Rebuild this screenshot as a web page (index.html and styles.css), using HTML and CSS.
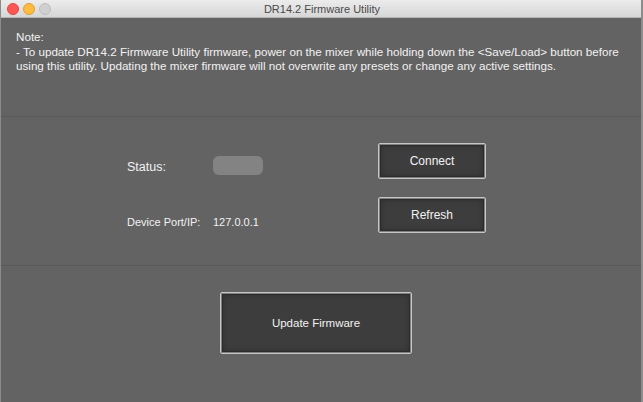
FILE: index.html
```html
<!DOCTYPE html>
<html>
<head>
<meta charset="utf-8">
<title>DR14.2 Firmware Utility</title>
<link rel="stylesheet" href="styles.css">
</head>
<body>
<div class="window">
  <div class="titlebar">
    <div class="lights">
      <span class="light red"></span>
      <span class="light yellow"></span>
      <span class="light gray"></span>
    </div>
    <div class="title">DR14.2 Firmware Utility</div>
  </div>
  <div class="note">
    <div>Note:</div>
    <div>- To update DR14.2 Firmware Utility firmware, power on the mixer while holding down the &lt;Save/Load&gt; button before<br>using this utility. Updating the mixer firmware will not overwrite any presets or change any active settings.</div>
  </div>
  <div class="middle">
    <div class="label status-label">Status:</div>
    <div class="pill"></div>
    <button class="btn small">Connect</button>
    <div class="label port-label">Device Port/IP:</div>
    <div class="label port-value">127.0.0.1</div>
    <button class="btn small">Refresh</button>
  </div>
  <div class="bottom">
    <button class="btn big">Update Firmware</button>
  </div>
</div>
</body>
</html>
```

FILE: styles.css
```css
html, body {
  margin: 0;
  padding: 0;
  background: #636363;
  width: 643px;
  height: 402px;
  overflow: hidden;
}

.window {
  width: 643px;
  height: 402px;
  display: flex;
  flex-direction: column;
  font-family: "Liberation Sans", Arial, sans-serif;
  color: #f2f2f2;
  background: #636363;
  box-sizing: border-box;
  border-left: 1px solid #8c8c8c;
  border-right: 2px solid #8c8c8c;
}

.titlebar {
  height: 18px;
  flex: none;
  position: relative;
  background: linear-gradient(#ececec, #d6d6d6);
  border-bottom: 1px solid #b5b5b5;
  box-sizing: border-box;
  display: flex;
  align-items: center;
  justify-content: center;
}

.lights {
  position: absolute;
  left: 6px;
  top: 3px;
  display: flex;
  gap: 4px;
}

.light {
  width: 12px;
  height: 12px;
  border-radius: 50%;
  box-sizing: border-box;
}
.red { background: #fc5753; border: 1px solid #df4744; }
.yellow { background: #fdbc40; border: 1px solid #de9f34; }
.gray { background: #d0d0d0; border: 1px solid #bdbdbd; }

.title {
  font-size: 11px;
  color: #4a4a4a;
  padding-left: 2px;
}

.note {
  height: 99px;
  flex: none;
  box-sizing: border-box;
  padding: 12px 0 0 15px;
  font-size: 11.65px;
  line-height: 14.5px;
  white-space: nowrap;
  border-bottom: 1px solid #595959;
}

.middle {
  height: 149px;
  flex: none;
  box-sizing: border-box;
  border-bottom: 1px solid #595959;
  padding: 26px 0 0 126px;
  display: grid;
  grid-template-columns: 86px 165px 108px;
  grid-template-rows: 36px 36px;
  row-gap: 18px;
}

.label {
  align-self: start;
  font-size: 12px;
  line-height: 15px;
}
.status-label {
  margin-top: 17px;
  font-size: 12.5px;
}
.port-label, .port-value {
  margin-top: 18px;
  font-size: 11px;
}

.pill {
  align-self: start;
  margin-top: 13px;
  width: 50px;
  height: 19px;
  border-radius: 6px;
  background: #838383;
}

.btn {
  font-family: "Liberation Sans", Arial, sans-serif;
  color: #f2f2f2;
  font-size: 12px;
  background: #3d3d3d;
  border: 1px solid #c6c6c6;
  border-radius: 2px;
  box-shadow: inset 0 0 0 1px #808080, inset 0 0 0 2px #2c2c2c, inset 0 0 6px #222222;
  padding: 0;
  margin: 0;
  box-sizing: border-box;
}

.small {
  width: 108px;
  height: 36px;
}

.bottom {
  flex: 1;
  padding: 26px 0 0 219px;
}

.big {
  width: 192px;
  height: 62px;
  font-size: 11.5px;
}
```
